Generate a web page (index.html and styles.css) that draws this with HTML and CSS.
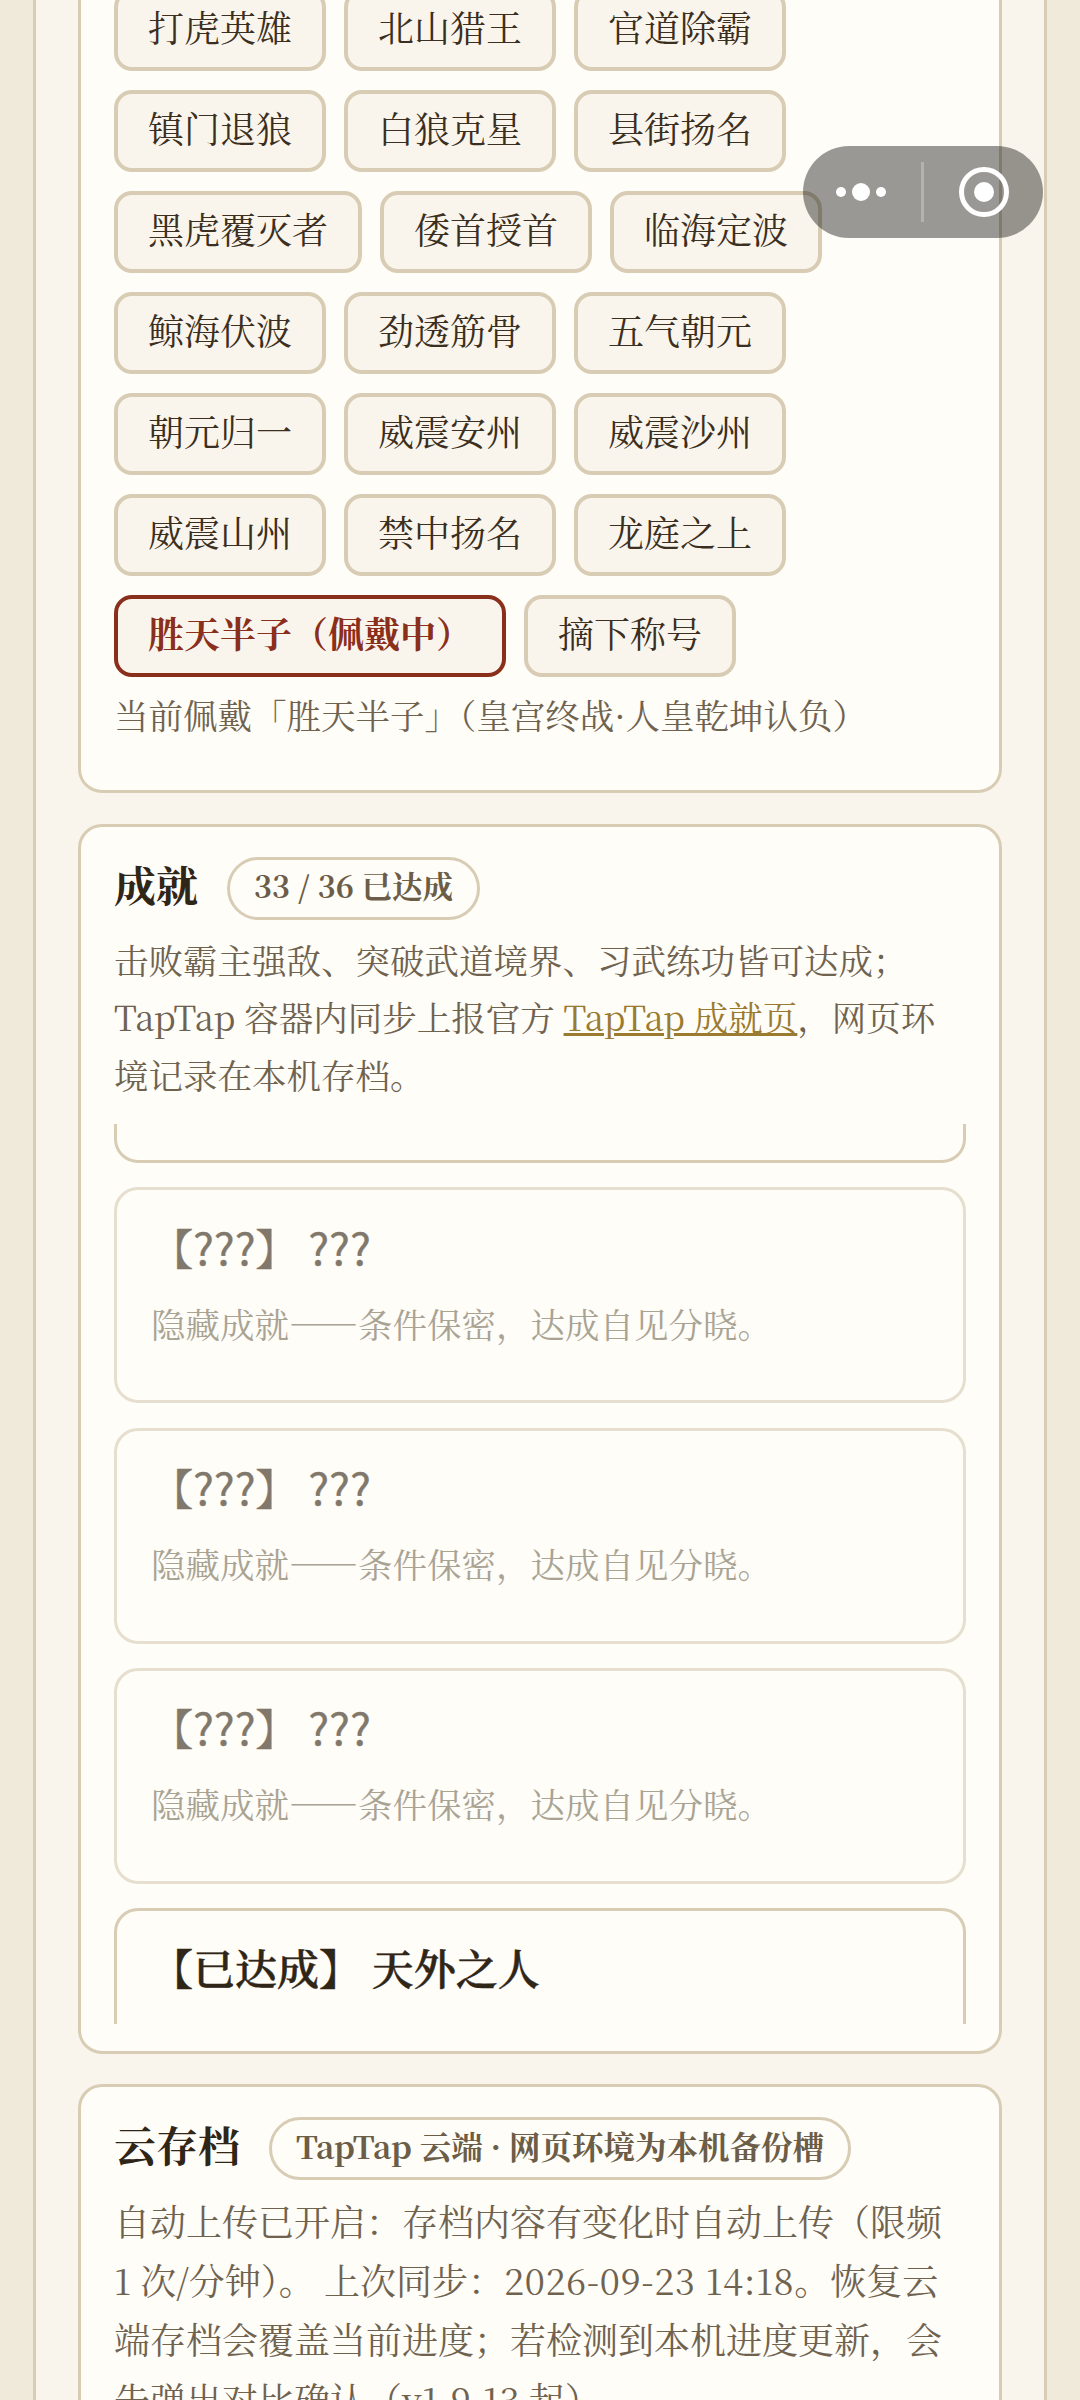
FILE: index.html
```html
<!DOCTYPE html>
<html lang="zh-CN">
<head>
<meta charset="utf-8">
<title>成就</title>
<link rel="stylesheet" href="styles.css">
</head>
<body>
<div class="viewport">
  <main class="page">
    <section class="card card-titles">
      <div class="chips">
        <button class="chip">打虎英雄</button>
        <button class="chip">北山猎王</button>
        <button class="chip">官道除霸</button>
        <button class="chip">镇门退狼</button>
        <button class="chip">白狼克星</button>
        <button class="chip">县街扬名</button>
        <button class="chip">黑虎覆灭者</button>
        <button class="chip">倭首授首</button>
        <button class="chip">临海定波</button>
        <button class="chip">鲸海伏波</button>
        <button class="chip">劲透筋骨</button>
        <button class="chip">五气朝元</button>
        <button class="chip">朝元归一</button>
        <button class="chip">威震安州</button>
        <button class="chip">威震沙州</button>
        <button class="chip">威震山州</button>
        <button class="chip">禁中扬名</button>
        <button class="chip">龙庭之上</button>
        <button class="chip chip-on">胜天半子（佩戴中）</button>
        <button class="chip">摘下称号</button>
      </div>
      <p class="note">当前佩戴「胜天半子」（皇宫终战·人皇乾坤认负）</p>
    </section>

    <section class="card">
      <header class="head">
        <h2 class="title">成就</h2>
        <span class="pill pill-sm">33 / 36 已达成</span>
      </header>
      <p class="para para-sm">击败霸主强敌、突破武道境界、习武练功皆可达成；TapTap 容器内同步上报官方 <a class="link" href="#">TapTap 成就页</a>，网页环境记录在本机存档。</p>
      <div class="list">
        <div class="track">
          <article class="item item-above"></article>
          <article class="item item-hidden"><h3 class="item-title">【<span class="q">???</span>】 <span class="q">???</span></h3><p class="item-desc">隐藏成就——条件保密，达成自见分晓。</p></article>
          <article class="item item-hidden"><h3 class="item-title">【<span class="q">???</span>】 <span class="q">???</span></h3><p class="item-desc">隐藏成就——条件保密，达成自见分晓。</p></article>
          <article class="item item-hidden"><h3 class="item-title">【<span class="q">???</span>】 <span class="q">???</span></h3><p class="item-desc">隐藏成就——条件保密，达成自见分晓。</p></article>
          <article class="item"><h3 class="item-title">【已达成】 天外之人</h3></article>
        </div>
      </div>
    </section>

    <section class="card">
      <header class="head">
        <h2 class="title">云存档</h2>
        <span class="pill">TapTap 云端 · 网页环境为本机备份槽</span>
      </header>
      <p class="para">自动上传已开启：存档内容有变化时自动上传（限频 1 次/分钟）。 上次同步：<span class="stamp">2026-09-23 14:18</span>。恢复云端存档会覆盖当前进度；若检测到本机进度更新，会先弹出对比确认（v1.9.13 起）。</p>
    </section>
  </main>

  <div class="capsule">
    <svg class="cap-more" width="60" height="20" viewBox="0 0 60 20"><circle cx="8" cy="10" r="5" fill="#fff"/><circle cx="28" cy="10" r="9" fill="#fff"/><circle cx="48" cy="10" r="5" fill="#fff"/></svg>
    <span class="cap-line"></span>
    <svg class="cap-close" width="52" height="52" viewBox="0 0 52 52"><circle cx="26" cy="26" r="22.5" fill="none" stroke="#fff" stroke-width="5"/><circle cx="26" cy="26" r="10" fill="#fff"/></svg>
  </div>
</div>
</body>
</html>
```
FILE: styles.css
```css
* { box-sizing: border-box; }
html, body { margin: 0; padding: 0; }
body {
  background: #f0eadb;
  font-family: "Noto Serif CJK SC", "Source Han Serif SC", "Noto Sans CJK SC", serif;
  color: #2f2618;
}
.viewport { position: relative; height: 2400px; overflow: hidden; }
.page {
  margin: 0 33px;
  padding: 0 42px;
  height: 2600px;
  background: #faf5ec;
  border-left: 3px solid #d8cdb4;
  border-right: 3px solid #d8cdb4;
}
.card {
  background: #fffdf8;
  border: 3px solid #d8cdb4;
  border-radius: 24px;
  padding: 30px 33px 27px;
  margin-bottom: 30px;
}
.card-titles { margin-top: -60px; margin-bottom: 31px; padding-top: 45.5px; padding-bottom: 51.5px; }
.chips { display: flex; flex-wrap: wrap; gap: 18.5px 18px; }
.chip {
  font: inherit;
  font-size: 36px;
  line-height: 46.5px;
  color: #3a2f20;
  background: #faf5ec;
  border: 4px solid #d8cdb4;
  border-radius: 18px;
  padding: 11px 30px 17px;
}
.chip-on { font-weight: 700; color: #8a2f1c; border-color: #8a2f1c; }
.note { margin: 11.5px 0 0; font-size: 34.5px; line-height: 50px; color: #6f6350; }
.head { display: flex; align-items: center; gap: 29px; }
.title {
  margin: 0;
  padding-bottom: 9px;
  font-size: 42px;
  line-height: 54px;
  font-weight: 700;
  color: #2f2618;
}
.pill {
  font-size: 31.5px;
  font-weight: 700;
  line-height: 45px;
  padding: 3px 24px 9px;
  border: 3px solid #d8cdb4;
  border-radius: 32px;
  color: #6b5d47;
}
.pill-sm { font-size: 30.5px; }
.para { margin: 11px 0 0; font-size: 36px; line-height: 59.4px; color: #6f6350; }
.para-sm { margin-top: 10.5px; font-size: 34.5px; line-height: 57.5px; }
.stamp { letter-spacing: 0.6px; }
.link { color: #9a7b2f; text-decoration: underline; }
.list { margin-top: 20.5px; height: 900px; overflow: hidden; }
.track { margin-top: -175px; display: flex; flex-direction: column; gap: 24.2px; }
.item { border: 3px solid #d8cdb4; border-radius: 24px; padding: 25.5px 34px 48.5px; background: #fffdf8; }
.item-above { height: 214px; margin-bottom: 0.8px; }
.item-hidden { border-color: #e6dfcf; }
.item-title {
  margin: 0;
  font-size: 42px;
  line-height: 60px;
  font-weight: 600;
  -webkit-text-stroke: 0.4px #2f2618;
  color: #2f2618;
}
.item-desc { margin: 18px 0 0; font-size: 34.5px; line-height: 57px; color: #6f6350; }
.item-hidden .item-title { color: #7f786b; -webkit-text-stroke-color: #7f786b; }
.item-hidden .item-desc { color: #a9a394; }
.q { font-family: "Noto Sans CJK SC", sans-serif; font-size: 44px; font-weight: 400; }
.capsule {
  position: absolute;
  left: 803px;
  top: 146px;
  width: 240px;
  height: 92px;
  border-radius: 46px;
  background: rgba(0, 0, 0, .4);
}
.cap-more { position: absolute; left: 30px; top: 36px; }
.cap-line { position: absolute; left: 118px; top: 16px; width: 2.5px; height: 60px; background: rgba(255, 255, 255, .25); }
.cap-close { position: absolute; left: 155px; top: 20px; }
```
